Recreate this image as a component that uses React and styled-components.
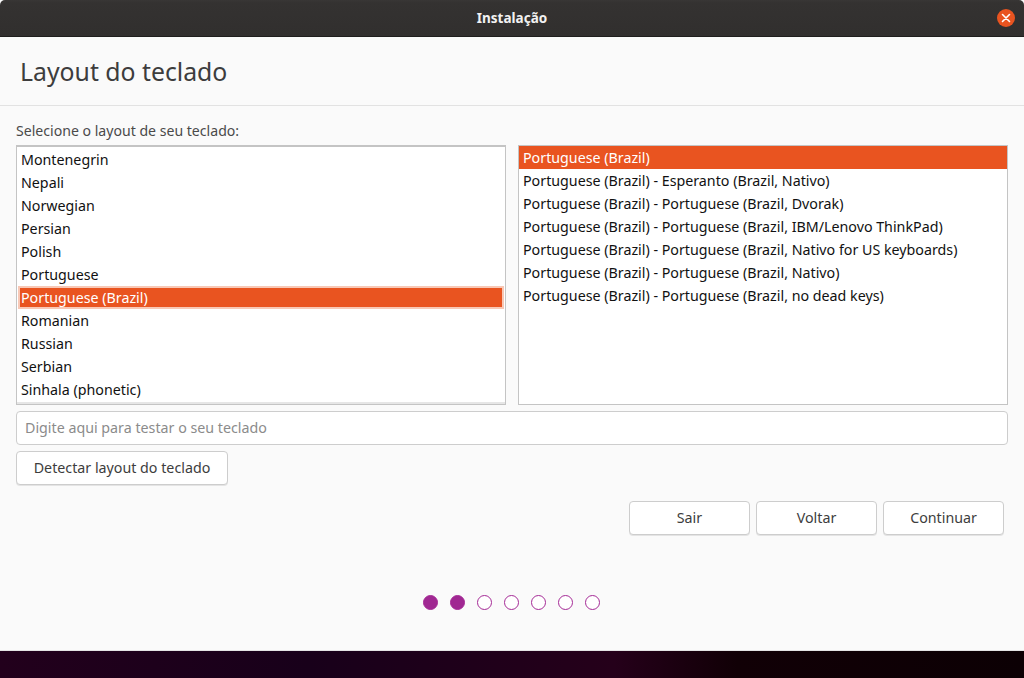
import React from "react";
import styled, { createGlobalStyle } from "styled-components";

const GlobalStyle = createGlobalStyle`
  html, body {
    margin: 0;
    padding: 0;
    height: 100%;
    overflow: hidden;
    background: #14000f;
  }
  * {
    box-sizing: border-box;
  }
`;

const Desktop = styled.div`
  width: 1024px;
  height: 678px;
  display: flex;
  flex-direction: column;
  font-family: "Noto Sans", "Open Sans", sans-serif;
  background: linear-gradient(90deg, #22001c 0%, #18001a 30%, #25001a 60%, #110006 72%, #0c0004 100%);
`;

const Window = styled.div`
  height: 651px;
  display: flex;
  flex-direction: column;
  background: #fafafa;
  border-bottom: 1px solid #e4e4e4;
`;

const TitleBar = styled.div`
  position: relative;
  height: 37px;
  flex-shrink: 0;
  display: flex;
  align-items: center;
  justify-content: center;
  background: linear-gradient(#383635 0, #343231 3px, #312f2e 100%);
  border-top-left-radius: 5px;
  border-top-right-radius: 5px;
  border-bottom: 1px solid #1f1e1d;
  color: #f2f2f2;
  font-size: 13.5px;
  font-weight: 700;
`;

const CloseButton = styled.div`
  position: absolute;
  right: 9px;
  top: 9px;
  width: 18px;
  height: 18px;
  border-radius: 50%;
  background: #e95420;
  display: flex;
  align-items: center;
  justify-content: center;
`;

const Header = styled.div`
  height: 69px;
  flex-shrink: 0;
  display: flex;
  align-items: center;
  padding: 0 20px 1px;
  border-bottom: 1px solid #e2e2e2;
`;

const Title = styled.h1`
  margin: 0;
  font-size: 24.8px;
  font-weight: 400;
  color: #3d3d3d;
`;

const Content = styled.div`
  flex: 1;
  display: flex;
  flex-direction: column;
  padding: 16px 16px 0;
`;

const Label = styled.div`
  height: 23px;
  font-size: 14.1px;
  line-height: 18px;
  color: #4a4a4a;
`;

const Lists = styled.div`
  display: grid;
  grid-template-columns: 490px 490px;
  gap: 12px;
  height: 260px;
`;

const List = styled.div`
  background: #fff;
  border: 1px solid #c4c4c4;
  border-top-width: ${({ $inset }) => ($inset ? "2px" : "1px")};
  padding: ${({ $inset }) => ($inset ? "1px 1px 0" : "0")};
  overflow: hidden;
  box-shadow: ${({ $inset }) => ($inset ? "inset 0 -2px 0 #e6e6e6" : "none")};
`;

const Row = styled.div`
  height: 23px;
  line-height: 23px;
  font-size: 14.25px;
  white-space: nowrap;
  padding-left: ${({ $inset }) => ($inset ? "3px" : "4px")};
  color: ${({ $selected }) => ($selected ? "#fff" : "#111")};
  background: ${({ $selected }) => ($selected ? "#e95420" : "transparent")};
  box-shadow: ${({ $inset, $selected }) =>
    $inset && $selected ? "inset 0 0 0 2px #f8c8b6" : "none"};
`;

const TestInput = styled.div`
  margin-top: 6px;
  height: 34px;
  display: flex;
  align-items: center;
  padding: 0 0 2px 8px;
  background: #fff;
  border: 1px solid #cdcdcd;
  border-radius: 4px;
  font-size: 14.25px;
  color: #8b8b8b;
`;

const Button = styled.div`
  width: ${({ $width }) => $width}px;
  height: 34px;
  display: flex;
  align-items: center;
  justify-content: center;
  padding-bottom: 2px;
  background: #fff;
  border: 1px solid #cdcdcd;
  border-radius: 4px;
  box-shadow: 0 1px 0 #e4e4e4;
  font-size: 14.25px;
  color: #3d3d3d;
`;

const DetectRow = styled.div`
  margin-top: 6px;
`;

const Actions = styled.div`
  margin-top: 16px;
  padding-right: 4px;
  display: flex;
  justify-content: flex-end;
  gap: 6px;
`;

const Dots = styled.div`
  margin-top: 60px;
  padding-right: 2px;
  display: flex;
  justify-content: center;
  gap: 12px;
`;

const Dot = styled.div`
  width: 15px;
  height: 15px;
  border-radius: 50%;
  border: 1.5px solid #a52a96;
  background: ${({ $filled }) => ($filled ? "#a02892" : "#fff")};
`;

const leftItems = [
  "Montenegrin",
  "Nepali",
  "Norwegian",
  "Persian",
  "Polish",
  "Portuguese",
  "Portuguese (Brazil)",
  "Romanian",
  "Russian",
  "Serbian",
  "Sinhala (phonetic)",
];

const rightItems = [
  "Portuguese (Brazil)",
  "Portuguese (Brazil) - Esperanto (Brazil, Nativo)",
  "Portuguese (Brazil) - Portuguese (Brazil, Dvorak)",
  "Portuguese (Brazil) - Portuguese (Brazil, IBM/Lenovo ThinkPad)",
  "Portuguese (Brazil) - Portuguese (Brazil, Nativo for US keyboards)",
  "Portuguese (Brazil) - Portuguese (Brazil, Nativo)",
  "Portuguese (Brazil) - Portuguese (Brazil, no dead keys)",
];

const App = () => (
  <>
    <GlobalStyle />
    <Desktop>
      <Window>
        <TitleBar>
          Instalação
          <CloseButton>
            <svg width="10" height="10" viewBox="0 0 10 10">
              <path d="M1.5 1.5l7 7M8.5 1.5l-7 7" stroke="#fff" strokeWidth="1.6" strokeLinecap="round" />
            </svg>
          </CloseButton>
        </TitleBar>
        <Header>
          <Title>Layout do teclado</Title>
        </Header>
        <Content>
          <Label>Selecione o layout de seu teclado:</Label>
          <Lists>
            <List $inset>
              {leftItems.map((item) => (
                <Row key={item} $inset $selected={item === "Portuguese (Brazil)"}>
                  {item}
                </Row>
              ))}
            </List>
            <List>
              {rightItems.map((item, i) => (
                <Row key={item} $selected={i === 0}>
                  {item}
                </Row>
              ))}
            </List>
          </Lists>
          <TestInput>Digite aqui para testar o seu teclado</TestInput>
          <DetectRow>
            <Button $width={212}>Detectar layout do teclado</Button>
          </DetectRow>
          <Actions>
            <Button $width={121}>Sair</Button>
            <Button $width={121}>Voltar</Button>
            <Button $width={121}>Continuar</Button>
          </Actions>
          <Dots>
            {[0, 1, 2, 3, 4, 5, 6].map((i) => (
              <Dot key={i} $filled={i < 2} />
            ))}
          </Dots>
        </Content>
      </Window>
    </Desktop>
  </>
);

export default App;
